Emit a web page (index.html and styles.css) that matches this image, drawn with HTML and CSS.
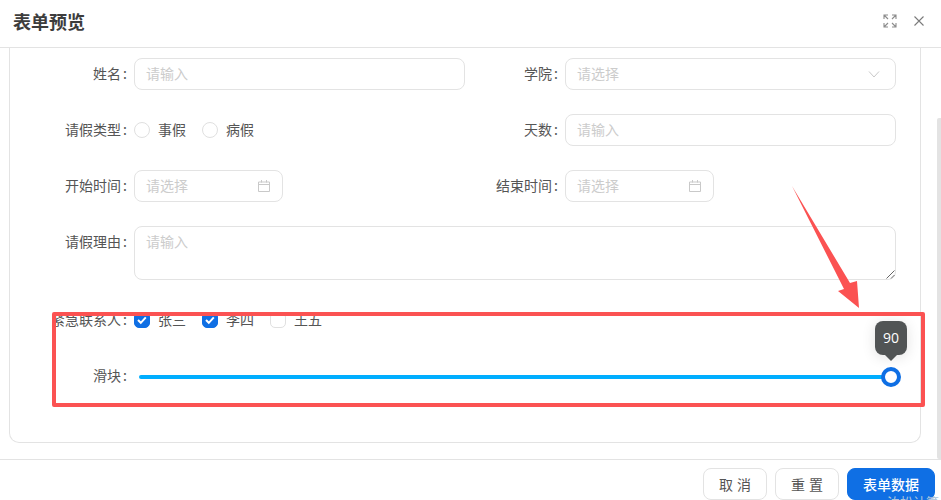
FILE: index.html
```html
<!DOCTYPE html>
<html lang="zh-CN">
<head>
    <meta charset="UTF-8">
    <title>表单预览</title>
    <link rel="stylesheet" href="styles.css">
</head>
<body>
    <div class="dialog">
        <!-- Header -->
        <div class="dialog-header">
            <span class="dialog-title">表单预览</span>
            <div class="header-tools">
                <svg width="14" height="14" viewBox="0 0 14 14" fill="none" stroke="#8c8c8c" stroke-width="1.1">
                    <path d="M1 5V1h4M1 1l4 4M9 1h4v4M13 1L9 5M1 9v4h4M1 13l4-4M9 13h4V9M13 13L9 9"/>
                </svg>
                <svg width="14" height="14" viewBox="0 0 14 14" fill="none" stroke="#7a7a7a" stroke-width="1.1">
                    <path d="M2.5 2.5l9 9M11.5 2.5l-9 9"/>
                </svg>
            </div>
        </div>

        <!-- Body -->
        <div class="dialog-body">
            <div class="form-card">
                <div class="form-grid">
                    <div class="field">
                        <label class="field-label">姓名</label>
                        <div class="input"><span class="placeholder">请输入</span></div>
                    </div>
                    <div class="field field-right">
                        <label class="field-label">学院</label>
                        <div class="input">
                            <span class="placeholder">请选择</span>
                            <svg width="12" height="12" viewBox="0 0 12 12" fill="none" stroke="#c9c9c9" stroke-width="1"><path d="M1 3.5l5 5.5 5-5.5"/></svg>
                        </div>
                    </div>
                    <div class="field">
                        <label class="field-label">请假类型</label>
                        <div class="options">
                            <span class="option"><i class="radio"></i>事假</span>
                            <span class="option"><i class="radio"></i>病假</span>
                        </div>
                    </div>
                    <div class="field field-right">
                        <label class="field-label">天数</label>
                        <div class="input"><span class="placeholder">请输入</span></div>
                    </div>
                    <div class="field">
                        <label class="field-label">开始时间</label>
                        <div class="input input-date">
                            <span class="placeholder">请选择</span>
                            <svg width="14" height="14" viewBox="0 0 14 14" fill="none" stroke="#c9c9c9" stroke-width="1"><path d="M1.5 3h11v9.5h-11zM1.5 5.5h11M4.5 1v2.5M9.5 1v2.5"/></svg>
                        </div>
                    </div>
                    <div class="field field-right">
                        <label class="field-label">结束时间</label>
                        <div class="input input-date">
                            <span class="placeholder">请选择</span>
                            <svg width="14" height="14" viewBox="0 0 14 14" fill="none" stroke="#c9c9c9" stroke-width="1"><path d="M1.5 3h11v9.5h-11zM1.5 5.5h11M4.5 1v2.5M9.5 1v2.5"/></svg>
                        </div>
                    </div>
                    <div class="field field-wide">
                        <label class="field-label">请假理由</label>
                        <div class="textarea">
                            <span class="placeholder">请输入</span>
                            <svg class="resize-grip" width="9" height="9" viewBox="0 0 9 9" stroke="#555" stroke-width="0.9"><path d="M0.5 8.5l8-8M5 8.5l3.5-3.5"/></svg>
                        </div>
                    </div>
                    <div class="field field-wide">
                        <label class="field-label">紧急联系人</label>
                        <div class="options">
                            <span class="option"><i class="check checked"><svg width="12" height="12" viewBox="0 0 12 12" fill="none" stroke="#fff" stroke-width="2"><path d="M2 6l2.8 2.8 5-5.5"/></svg></i>张三</span>
                            <span class="option"><i class="check checked"><svg width="12" height="12" viewBox="0 0 12 12" fill="none" stroke="#fff" stroke-width="2"><path d="M2 6l2.8 2.8 5-5.5"/></svg></i>李四</span>
                            <span class="option"><i class="check"></i>王五</span>
                        </div>
                    </div>
                    <div class="field field-wide">
                        <label class="field-label">滑块</label>
                        <div class="slider">
                            <div class="slider-track"></div>
                            <div class="slider-thumb">
                                <div class="slider-tip">90</div>
                            </div>
                        </div>
                    </div>
                </div>
            </div>
            <div class="scroll-thumb"></div>
        </div>

        <!-- Footer -->
        <div class="dialog-footer">
            <button class="btn">取 消</button>
            <button class="btn">重 置</button>
            <button class="btn btn-primary">表单数据</button>
        </div>
    </div>

    <!-- Screenshot annotation -->
    <div class="mark-box"></div>
    <svg class="mark-arrow" width="75" height="130" viewBox="0 0 75 130">
        <path d="M2 1L60 98L67 96L69 123L48 106L54 104Z" fill="#fb5252"/>
    </svg>
    <div class="watermark">泊松计算</div>
</body>
</html>
```

FILE: styles.css
```css
body {
    margin: 0;
    font-family: "Noto Sans CJK SC", "Noto Sans", sans-serif;
    font-size: 14px;
    color: #555;
    background-color: #fff;
    overflow: hidden;
}
.dialog {
    display: flex;
    flex-direction: column;
    height: 500px;
    overflow: hidden;
}
.dialog-header {
    flex: 0 0 48px;
    box-sizing: border-box;
    display: flex;
    align-items: center;
    justify-content: space-between;
    padding: 0 15px 6px 13px;
    border-bottom: 1px solid #e3e3e3;
}
.dialog-title {
    font-size: 18px;
    font-weight: 700;
    color: #3d3d3d;
}
.header-tools {
    display: flex;
    gap: 15px;
}
.dialog-body {
    position: relative;
    flex: 1;
    overflow: hidden;
    padding: 0 20px 0 9px;
}
.form-card {
    height: 395px;
    box-sizing: border-box;
    border: 1px solid #e3e3e3;
    border-top: none;
    border-radius: 0 0 10px 10px;
}
.form-grid {
    display: grid;
    grid-template-columns: 455px 1fr;
    row-gap: 24px;
    padding: 10px 24px 0 0;
}
.field {
    display: flex;
    align-items: flex-start;
    min-width: 0;
}
.field-wide {
    grid-column: 1 / 3;
}
.field-label {
    flex: 0 0 auto;
    width: 124px;
    line-height: 30px;
    text-align: right;
    white-space: nowrap;
}
.field-label::after {
    content: ":";
    margin: 0 7px 0 2px;
}
.field-right .field-label {
    width: 100px;
}
.input {
    flex: 1;
    display: flex;
    align-items: center;
    justify-content: space-between;
    box-sizing: border-box;
    height: 32px;
    padding: 0 15px 2px 11px;
    border: 1px solid #e3e3e3;
    border-radius: 8px;
    background-color: #fff;
}
.input svg {
    margin-top: 2px;
}
.input-date {
    flex: 0 0 149px;
    padding-right: 11px;
}
.placeholder {
    color: #cccccc;
}
.textarea {
    position: relative;
    flex: 1;
    box-sizing: border-box;
    height: 54px;
    padding: 3px 11px;
    line-height: 22px;
    border: 1px solid #e3e3e3;
    border-radius: 8px;
}
.resize-grip {
    position: absolute;
    right: 0;
    bottom: 0;
}
.options {
    display: flex;
    align-items: center;
    gap: 16px;
    box-sizing: border-box;
    height: 32px;
    padding-bottom: 2px;
}
.option {
    display: flex;
    align-items: center;
    gap: 8px;
}
.radio {
    width: 16px;
    height: 16px;
    margin-top: 2px;
    box-sizing: border-box;
    border: 1px solid #e0e0e0;
    border-radius: 50%;
}
.check {
    display: flex;
    align-items: center;
    justify-content: center;
    width: 16px;
    height: 16px;
    margin-top: 2px;
    box-sizing: border-box;
    border: 1px solid #e0e0e0;
    border-radius: 5px;
}
.check.checked {
    background-color: #0f6fe4;
    border-color: #0f6fe4;
}
.slider {
    position: relative;
    flex: 1;
    height: 34px;
    margin: 0 5px 0 5px;
    display: flex;
    align-items: center;
}
.slider-track {
    width: 100%;
    height: 4px;
    border-radius: 2px;
    background-color: #00aeff;
}
.slider-thumb {
    position: absolute;
    right: -10px;
    top: 7px;
    width: 20px;
    height: 20px;
    box-sizing: border-box;
    border: 4px solid #0f6fe4;
    border-radius: 50%;
    background-color: #fff;
}
.slider-tip {
    position: absolute;
    left: 50%;
    bottom: 28px;
    transform: translateX(-50%);
    width: 32px;
    height: 34px;
    line-height: 34px;
    border-radius: 8px;
    background-color: #515455;
    color: #fff;
    text-align: center;
    font-family: "Open Sans", sans-serif;
    box-shadow: 0 2px 14px rgba(0, 0, 0, 0.12);
}
.slider-tip::after {
    content: "";
    position: absolute;
    left: 50%;
    bottom: -6px;
    margin-left: -6px;
    border-left: 6px solid transparent;
    border-right: 6px solid transparent;
    border-top: 6px solid #515455;
}
.scroll-thumb {
    position: absolute;
    right: 0;
    top: 70px;
    bottom: 0;
    width: 4px;
    border-radius: 2px 0 0 2px;
    background-color: #e3e3e3;
}
.dialog-footer {
    flex: 0 0 41px;
    box-sizing: border-box;
    display: flex;
    justify-content: flex-end;
    gap: 8px;
    padding: 8px 6px 0 0;
    border-top: 1px solid #e3e3e3;
}
.btn {
    width: 64px;
    height: 32px;
    padding: 0;
    border: 1px solid #e3e3e3;
    border-radius: 8px;
    background-color: #fff;
    color: #555;
    font-family: inherit;
    font-size: 14px;
    word-spacing: 1px;
}
.btn-primary {
    width: 88px;
    border-color: #0f6fe4;
    background-color: #0f6fe4;
    color: #fff;
    font-weight: 500;
}
.mark-box {
    position: absolute;
    left: 52px;
    top: 312px;
    width: 873px;
    height: 95px;
    box-sizing: border-box;
    border: 4px solid #fb5252;
    border-radius: 2px;
}
.mark-arrow {
    position: absolute;
    left: 790px;
    top: 185px;
}
.watermark {
    position: absolute;
    left: 887px;
    top: 494px;
    font-size: 13px;
    line-height: 16px;
    color: #a9c3dc;
    white-space: nowrap;
}
```
